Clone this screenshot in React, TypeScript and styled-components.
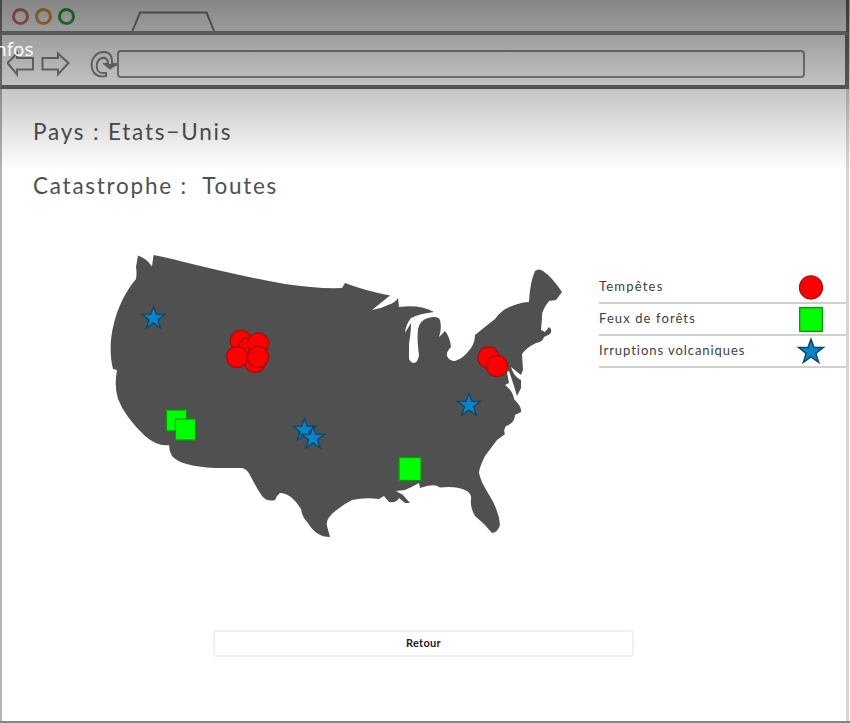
import React from "react";
import styled, { createGlobalStyle } from "styled-components";

const Global = createGlobalStyle`
  * { box-sizing: border-box; }
  body { margin: 0; background: #fff; overflow: hidden; }
`;

const Window = styled.div`
  position: relative;
  display: flex;
  flex-direction: column;
  width: 850px;
  height: 723px;
  overflow: hidden;
  background: #fff;
  font-family: Lato, "Open Sans", sans-serif;
  color: #505050;
  border-bottom: 2px solid #858585;
`;

const TabBar = styled.header`
  display: flex;
  align-items: flex-end;
  height: 35px;
  flex: none;
  border-bottom: 4px solid #909090;
  border-left: 2px solid #858585;
  margin-right: 1px;
  border-right: 3px solid #707070;
`;

const Lights = styled.div`
  display: flex;
  gap: 7px;
  padding: 0 0 5px 10px;
  margin-right: 57px;
`;

const Light = styled.i<{ $color: string }>`
  width: 17px;
  height: 17px;
  margin-right: -1px;
  margin-bottom: 1px;
  border: 3px solid ${(p) => p.$color};
  border-radius: 50%;
`;

const Toolbar = styled.nav`
  display: flex;
  align-items: center;
  height: 54px;
  flex: none;
  padding: 6px 0 0 5px;
  border-bottom: 4px solid #6c6c6c;
  border-left: 2px solid #858585;
  border-right: 4px solid #707070;
  margin-right: 1px;
`;

const ToolIcons = styled.svg`
  display: block;
  flex: none;
  fill: none;
  stroke: #858585;
  stroke-width: 2;
`;

const Address = styled.div`
  width: 688px;
  height: 28px;
  margin-top: 2px;
  border: 2px solid #929292;
  border-radius: 4px;
`;

const Page = styled.main`
  flex: 1;
  display: flex;
  flex-direction: column;
  border-left: 2px solid #b4b4b4;
  border-right: 3px solid #d6d6d6;
  margin-right: 1px;
`;

const Heading = styled.h1<{ $gap: number; $spacing: number }>`
  margin: ${(p) => p.$gap}px 0 0 31px;
  height: 30px;
  font-size: 22.5px;
  font-weight: 400;
  line-height: 30px;
  letter-spacing: ${(p) => p.$spacing}px;
  white-space: pre;
`;

const Content = styled.section`
  display: flex;
  align-items: flex-start;
  margin-top: 49px;
  padding-left: 103px;
`;

const MapDrawing = styled.svg`
  display: block;
  flex: none;
  width: 460px;
  height: 292px;
`;

const Legend = styled.ul`
  list-style: none;
  margin: 22px 0 0 34px;
  padding: 0;
  flex: 1;
`;

const LegendRow = styled.li<{ $spacing: number }>`
  display: flex;
  justify-content: space-between;
  align-items: center;
  height: 32px;
  padding-right: 18px;
  border-bottom: 2px solid #d0d0d0;
  font-size: 13px;
  color: #404040;
  letter-spacing: ${(p) => p.$spacing}px;
  span { margin-top: -2px; }
  svg { display: block; overflow: visible; }
`;

const BackButton = styled.button`
  align-self: flex-start;
  width: 421px;
  height: 27px;
  margin: 88px 0 0 211px;
  padding: 0 0 3px;
  border: 2px solid #f0f0f0;
  border-radius: 3px;
  background: #fff;
  color: #222;
  font: 700 11px Lato, sans-serif;
  letter-spacing: 0.3px;
`;

const Shade = styled.div`
  position: absolute;
  inset: 0 0 auto;
  height: 170px;
  background: linear-gradient(rgba(0, 0, 0, 0.48), rgba(0, 0, 0, 0));
  pointer-events: none;
`;

const InfoLabel = styled.span`
  position: absolute;
  top: 35px;
  left: -5px;
  font: 400 19px/28px "Open Sans", sans-serif;
  color: #fff;
`;

type Kind = "storm" | "fire" | "volcano";

const STAR = "M0-12 3-3.8 12-3.8 4.7 1.8 7.5 10.6 0 5.2-7.5 10.6-4.7 1.8-12-3.8-3-3.8Z";

function Marker({ kind, x, y, size = 1 }: { kind: Kind; x: number; y: number; size?: number }) {
  const place = `translate(${x} ${y}) scale(${size})`;
  if (kind === "storm") return <circle transform={place} r="11.2" fill="#f00" stroke="#a50d0d" strokeWidth="1.2" />;
  if (kind === "fire")
    return <rect transform={place} x="-11" y="-11.5" width="22" height="23" fill="#0f0" stroke="#0a9a0a" strokeWidth="1.3" />;
  return <path transform={place} d={STAR} fill="#0a84c8" stroke="#0b4768" strokeWidth="1.4" />;
}

const COUNTRY =
  "M138 255.5Q146 258 152 266.5L153.5 255Q169 258 180 261Q240 276 285 284Q318 289 342 288L345 283Q366 291 390 295.5L372 310Q380 309 388 305Q395 303 398 298L399 307Q420 304 434 312Q418 314 411 318Q406 324 405 333L411 323Q411 332 409 344V359Q411 363 414 363Q418 362 419 355C418 347 417 339 418 329Q420 320 428 318Q438 315 440 320Q442 329 439 337L445 331Q450 337 451 347Q446 352 447 356Q449 361 455 361Q463 359 471 348Q475 342 475 335Q486 326 495 319Q502 309 512 306Q522 302 529 302Q530 282 535 271Q539 268 543 271Q552 277 562 292L556 300 549 301Q541 311 542 318L541 330 545 332 549 327Q553 330 550 334L544 337Q543 342 536 343Q526 348 522 354L523 370 521 375 511 367Q514 377 521 380L521 388 517 396 514 386 509 371 507 372 509 383 505 385Q513 391 514 399Q522 407 521 412L515 415Q515 423 506 426Q503 430 505 434Q501 437 497 440L485 456Q479 468 479 473Q481 482 488 493Q499 510 500 525Q498 532 492 533L484 524 475 516Q470 507 471 500Q472 493 465 490Q456 486 440 487.5Q434 483 420 488L419 483Q412 487 405 490L396 491 403 495 410 503 405 503 399 498Q397 503 389 502L384 496 379 499Q365 497 352 500Q344 504 338 509Q325 518 327 526L330 537Q316 537 308 523Q302 517 301 509Q291 493 280 493Q277 495 275 500Q267 502 262 496Q256 487 251 477Q247 468 241 468H215Q180 466 172 456Q169 451 169 445Q158 447 145 436Q125 417 118 399Q114 386 117 370L113 369C106 342 115 304 136 279Q137 273 136 267Z";

const markers: [Kind, number, number, number][] = [
  ["volcano", 153.5, 318, 0.95],
  ["storm", 241, 341, 0.95],
  ["storm", 249, 348, 0.95],
  ["storm", 255, 362, 0.95],
  ["storm", 258, 343.5, 0.95],
  ["storm", 237, 357, 0.95],
  ["storm", 258, 357, 0.95],
  ["fire", 176.5, 420.5, 0.91],
  ["fire", 185.5, 429.5, 0.91],
  ["volcano", 304.5, 430, 0.95],
  ["volcano", 313, 438, 0.95],
  ["volcano", 469, 405, 0.97],
  ["fire", 410, 469, 1],
  ["storm", 488.5, 357.5, 0.95],
  ["storm", 497, 366, 0.95],
];

const legend: { kind: Kind; label: string; spacing: number }[] = [
  { kind: "storm", label: "Tempêtes", spacing: 1.2 },
  { kind: "fire", label: "Feux de forêts", spacing: 1.1 },
  { kind: "volcano", label: "Irruptions volcaniques", spacing: 0.95 },
];

export default function App() {
  return (
    <Window>
      <Global />
      <TabBar>
        <Lights>
          <Light $color="#d9737a" />
          <Light $color="#e59a3a" />
          <Light $color="#30a93a" />
        </Lights>
        <ToolIcons width="86" height="22" viewBox="132 9 86 22">
          <path d="M133 32 141 12.500H207.500L215.500 32" />
        </ToolIcons>
      </TabBar>
      <Toolbar>
        <ToolIcons width="110" height="30" viewBox="7 48 110 30">
          <path d="M7.500 63 17 53.500V58H33V69.500H17V74.500Z" />
          <path d="M42.500 58H58V53.500L68.500 63 58 74.500V69.500H42.500Z" />
          <path d="M106 76Q96 78 92.500 70C89 59 97 51 105 52Q113 53 112 64H115.500L110 68.500 105 64H108Q108 57 102 58C95 60 95 73 102 73H106Z" />
          <path d="M106 65H115L110 68Z" fill="#858585" />
          <path d="M111 65H117" />
        </ToolIcons>
        <Address />
      </Toolbar>
      <Page>
        <Heading $gap={28} $spacing={1.8}>Pays : Etats−Unis</Heading>
        <Heading $gap={24} $spacing={1.75}>Catastrophe :  Toutes</Heading>
        <Content>
          <MapDrawing viewBox="105 250 460 292">
            <path d={COUNTRY} fill="#505050" />
            {markers.map(([kind, x, y, size], i) => (
              <Marker key={i} kind={kind} x={x} y={y} size={size} />
            ))}
          </MapDrawing>
          <Legend>
            {legend.map(({ kind, label, spacing }) => (
              <LegendRow key={kind} $spacing={spacing}>
                <span>{label}</span>
                <svg width="26" height="26" viewBox="-9 -13 26 26">
                  <Marker kind={kind} x={0} y={0.5} size={1.03} />
                </svg>
              </LegendRow>
            ))}
          </Legend>
        </Content>
        <BackButton>Retour</BackButton>
      </Page>
      <Shade />
      <InfoLabel>nfos</InfoLabel>
    </Window>
  );
}
